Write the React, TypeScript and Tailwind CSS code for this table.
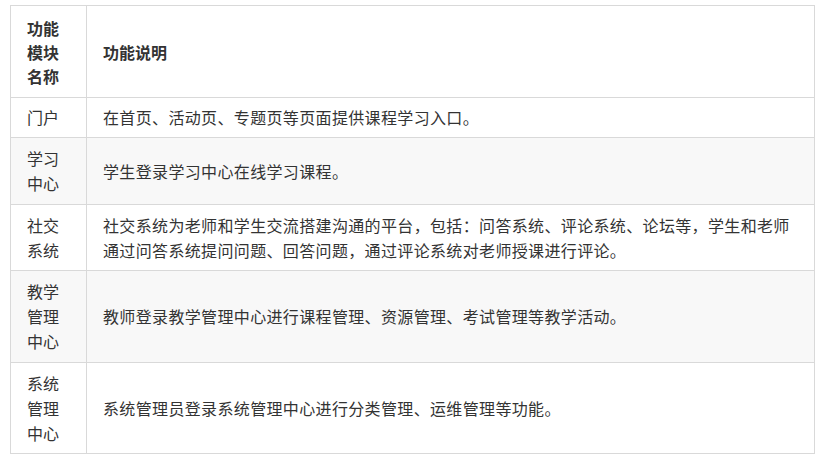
import React from "react";

const rows: { name: string[]; desc: React.ReactNode; h: string; gray: boolean }[] = [
  { name: ["门户"], desc: "在首页、活动页、专题页等页面提供课程学习入口。", h: "h-[40px]", gray: false },
  { name: ["学习", "中心"], desc: "学生登录学习中心在线学习课程。", h: "h-[67px]", gray: true },
  {
    name: ["社交", "系统"],
    desc: (
      <>
        社交系统为老师和学生交流搭建沟通的平台，包括：问答系统、评论系统、论坛等，学生和老师
        <br />
        通过问答系统提问问题、回答问题，通过评论系统对老师授课进行评论。
      </>
    ),
    h: "h-[66px]",
    gray: false,
  },
  { name: ["教学", "管理", "中心"], desc: "教师登录教学管理中心进行课程管理、资源管理、考试管理等教学活动。", h: "h-[92px]", gray: true },
  { name: ["系统", "管理", "中心"], desc: "系统管理员登录系统管理中心进行分类管理、运维管理等功能。", h: "h-[91px]", gray: false },
];

export default function App() {
  return (
    <div
      className="w-[828px] h-[468px] bg-white pl-[10px] pt-[5px] text-[#333] text-[16px]"
      style={{ fontFamily: '"Noto Sans CJK SC", "Noto Sans", sans-serif' }}
    >
      <table className="w-[805px] border-collapse border border-[#d9d9d9] table-fixed">
        <colgroup>
          <col className="w-[76px]" />
          <col />
        </colgroup>
        <tbody>
          <tr className="h-[92px] bg-white">
            <td className="border border-[#d9d9d9] pl-[16px] align-middle font-bold leading-[24px]">
              功能
              <br />
              模块
              <br />
              名称
            </td>
            <td className="border border-[#d9d9d9] pl-[16px] align-middle font-bold leading-[24px]">功能说明</td>
          </tr>
          {rows.map((r, i) => (
            <tr key={i} className={`${r.h} ${r.gray ? "bg-[#f8f8f8]" : "bg-white"}`}>
              <td className="border border-[#d9d9d9] pl-[16px] align-middle leading-[25px]">
                {r.name.map((n, j) => (
                  <div key={j}>{n}</div>
                ))}
              </td>
              <td className="border border-[#d9d9d9] pl-[16px] pr-[8px] align-middle leading-[25px] whitespace-nowrap tracking-[0.35px]">
                {r.desc}
              </td>
            </tr>
          ))}
        </tbody>
      </table>
    </div>
  );
}
